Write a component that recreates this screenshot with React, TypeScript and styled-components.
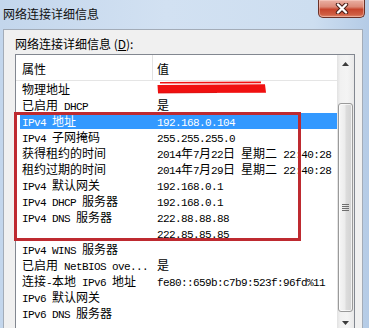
import React from "react";
import styled, { createGlobalStyle } from "styled-components";

const GlobalStyle = createGlobalStyle`
  html, body { margin: 0; padding: 0; overflow: hidden; }
  body {
    font-family: "Noto Sans CJK SC", "Noto Sans", sans-serif;
    font-size: 12px;
    color: #000;
  }
`;

const Window = styled.div`
  position: relative;
  width: 369px;
  height: 328px;
  overflow: hidden;
  display: flex;
  flex-direction: column;
  background: linear-gradient(90deg, #c3d6ec 0%, #d2e1f2 45%, #cddef0 85%, #b4cbe6 100%);
`;

const TitleBar = styled.div`
  height: 29px;
  flex: none;
  display: flex;
  align-items: flex-start;
`;

const Title = styled.div`
  padding: 6px 0 0 3px;
  line-height: 16px;
  font-size: 12px;
  color: #111;
`;

const CloseButton = styled.div`
  margin-left: auto;
  margin-right: 4px;
  width: 47px;
  height: 18px;
  box-sizing: border-box;
  border: 1px solid #6a3128;
  border-top: none;
  border-radius: 0 0 5px 5px;
  background: linear-gradient(#eab0a4 0%, #dc8a78 40%, #c7452d 55%, #cf5e43 85%, #e08a6e 100%);
  box-shadow: inset 0 0 0 1px rgba(255, 220, 210, 0.45);
  display: flex;
  align-items: center;
  justify-content: center;
`;

const Panel = styled.div`
  flex: 1;
  margin-left: 3px;
  width: 360px;
  box-sizing: border-box;
  border: 1px solid #a3acb8;
  border-bottom: none;
  background: #f0f0f0;
  padding: 6px 7px 0 11px;
  display: flex;
  flex-direction: column;
`;

const Label = styled.div`
  line-height: 16px;
  margin-bottom: 2px;
  font-size: 12px;
  u { text-decoration: underline; }
`;

const ListBox = styled.div`
  width: 340px;
  height: 278px;
  box-sizing: border-box;
  border: 1px solid #828790;
  background: #fff;
  display: flex;
  flex: none;
`;

const ListContent = styled.div`
  flex: 1;
  min-width: 0;
  display: flex;
  flex-direction: column;
`;

const HeaderRow = styled.div`
  height: 26px;
  box-sizing: border-box;
  border-bottom: 1px solid #e5e5e5;
  display: grid;
  grid-template-columns: 136px 1fr;
`;

const HeaderCell = styled.div<{ $divider?: boolean }>`
  display: flex;
  align-items: center;
  padding-top: 2px;
  padding-left: ${(p) => (p.$divider ? "4px" : "6px")};
  border-left: ${(p) => (p.$divider ? "1px solid #e2e2e2" : "none")};
  font-size: 12px;
  color: #000;
`;

const Row = styled.div<{ $selected?: boolean }>`
  height: 16px;
  line-height: 16px;
  padding-left: 4px;
  display: grid;
  grid-template-columns: 132px 1fr;
  background: ${(p) => (p.$selected ? "#3399ff" : "transparent")};
  background-clip: content-box;
  color: ${(p) => (p.$selected ? "#fff" : "#000")};
`;

const Cell = styled.div<{ $value?: boolean }>`
  padding-left: ${(p) => (p.$value ? "5px" : "2px")};
  white-space: nowrap;
  overflow: hidden;
  font-size: 12px;
`;

const Latin = styled.span`
  font-family: "Liberation Mono", monospace;
  font-size: 11px;
  letter-spacing: -0.6px;
  white-space: pre;
`;

const ScrollBar = styled.div`
  width: 17px;
  flex: none;
  display: flex;
  flex-direction: column;
  background: linear-gradient(90deg, #e2e2e2 0%, #f1f1f1 20%, #f4f4f4 60%, #e9e9e9 100%);
`;

const ArrowButton = styled.div`
  height: 17px;
  flex: none;
  display: flex;
  align-items: center;
  justify-content: center;
`;

const Track = styled.div`
  flex: 1;
  display: flex;
  flex-direction: column;
`;

const Thumb = styled.div`
  margin: 31px 1px 0 1px;
  height: 209px;
  box-sizing: border-box;
  border: 1px solid #9a9a9a;
  border-radius: 3px;
  background: linear-gradient(90deg, #f6f6f6 0%, #ececec 45%, #dcdcdc 55%, #d2d2d2 100%);
  box-shadow: inset 0 0 0 1px rgba(255, 255, 255, 0.7);
  display: flex;
  align-items: center;
  justify-content: center;
`;

const Annotation = styled.div`
  position: absolute;
  left: 14px;
  top: 112px;
  width: 287px;
  height: 129px;
  box-sizing: border-box;
  border: 3px solid #be2a30;
  pointer-events: none;
`;

const Redaction = styled.svg`
  display: block;
`;

const CJK_SPLIT = /([\u2e80-\u9fff\u3000-\u303f\uff00-\uffef]+)/;
const CJK_TEST = /^[\u2e80-\u9fff\u3000-\u303f\uff00-\uffef]+$/;

function Mixed({ text }: { text: string }) {
  const parts = text.split(CJK_SPLIT).filter((p) => p !== "");
  return (
    <>
      {parts.map((p, i) =>
        CJK_TEST.test(p) ? <span key={i}>{p}</span> : <Latin key={i}>{p}</Latin>
      )}
    </>
  );
}

type RowData = { name: string; value: string; selected?: boolean; redacted?: boolean };

const rows: RowData[] = [
  { name: "物理地址", value: "", redacted: true },
  { name: "已启用 DHCP", value: "是" },
  { name: "IPv4 地址", value: "192.168.0.104", selected: true },
  { name: "IPv4 子网掩码", value: "255.255.255.0" },
  { name: "获得租约的时间", value: "2014年7月22日 星期二 22:40:28" },
  { name: "租约过期的时间", value: "2014年7月29日 星期二 22:40:28" },
  { name: "IPv4 默认网关", value: "192.168.0.1" },
  { name: "IPv4 DHCP 服务器", value: "192.168.0.1" },
  { name: "IPv4 DNS 服务器", value: "222.88.88.88" },
  { name: "", value: "222.85.85.85" },
  { name: "IPv4 WINS 服务器", value: "" },
  { name: "已启用 NetBIOS ove...", value: "是" },
  { name: "连接-本地 IPv6 地址", value: "fe80::659b:c7b9:523f:96fd%11" },
  { name: "IPv6 默认网关", value: "" },
  { name: "IPv6 DNS 服务器", value: "" },
];

function CloseGlyph() {
  return (
    <svg width="14" height="11" viewBox="0 0 14 11">
      <path d="M3 1.5 L11 9.5 M11 1.5 L3 9.5" stroke="#4a2019" strokeWidth="4.4" strokeLinecap="round" />
      <path d="M3 1.5 L11 9.5 M11 1.5 L3 9.5" stroke="#ffffff" strokeWidth="2.4" strokeLinecap="round" />
    </svg>
  );
}

function RedScribble() {
  return (
    <Redaction width="112" height="13" viewBox="0 0 112 13">
      <path d="M3 1.8 L104 1.4" stroke="#f01010" strokeWidth="1.6" />
      <path d="M0.5 4 L108 3.2 L109 11.8 L1 12 Z" fill="#f01010" />
      <path d="M1 12 L60 11.5" stroke="#d80c0c" strokeWidth="0.8" />
    </Redaction>
  );
}

export default function App() {
  return (
    <>
      <GlobalStyle />
      <Window>
        <TitleBar>
          <Title>网络连接详细信息</Title>
          <CloseButton>
            <CloseGlyph />
          </CloseButton>
        </TitleBar>
        <Panel>
          <Label>
            网络连接详细信息 (<u>D</u>):
          </Label>
          <ListBox>
            <ListContent>
              <HeaderRow>
                <HeaderCell>属性</HeaderCell>
                <HeaderCell $divider>值</HeaderCell>
              </HeaderRow>
              {rows.map((r, i) => (
                <Row key={i} $selected={r.selected}>
                  <Cell>
                    <Mixed text={r.name} />
                  </Cell>
                  <Cell $value>
                    {r.redacted ? <RedScribble /> : <Mixed text={r.value} />}
                  </Cell>
                </Row>
              ))}
            </ListContent>
            <ScrollBar>
              <ArrowButton>
                <svg width="7" height="4" viewBox="0 0 7 4">
                  <polygon points="0,4 3.5,0 7,4" fill="#3c3c3c" />
                </svg>
              </ArrowButton>
              <Track>
                <Thumb>
                  <svg width="7" height="7" viewBox="0 0 7 7">
                    <path d="M0 0.5 H7 M0 2.5 H7 M0 4.5 H7 M0 6.5 H7" stroke="#6e6e6e" strokeWidth="1" />
                  </svg>
                </Thumb>
              </Track>
              <ArrowButton>
                <svg width="7" height="4" viewBox="0 0 7 4">
                  <polygon points="0,0 7,0 3.5,4" fill="#3c3c3c" />
                </svg>
              </ArrowButton>
            </ScrollBar>
          </ListBox>
        </Panel>
        <Annotation />
      </Window>
    </>
  );
}
